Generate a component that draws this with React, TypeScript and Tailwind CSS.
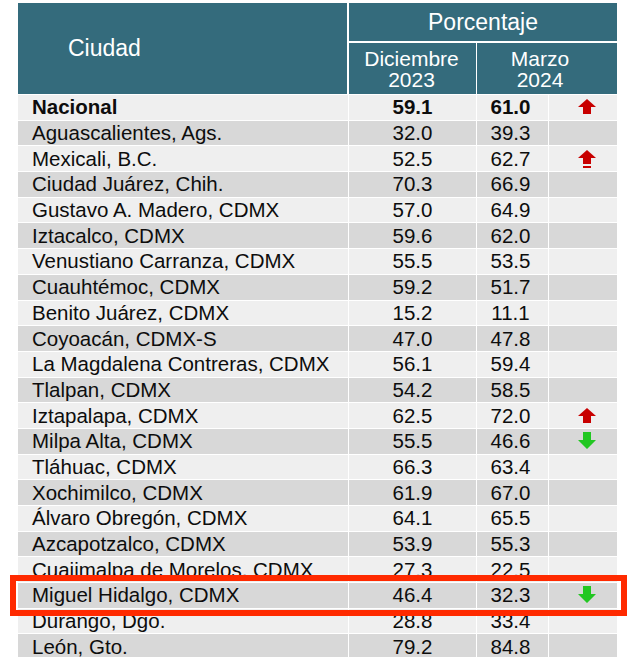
import React from "react";

type Row = { name: string; dic: string; mar: string; arrow?: "up" | "upbar" | "down"; bold?: boolean; box?: boolean };

const rows: Row[] = [
  { name: "Nacional", dic: "59.1", mar: "61.0", arrow: "up", bold: true },
  { name: "Aguascalientes, Ags.", dic: "32.0", mar: "39.3" },
  { name: "Mexicali, B.C.", dic: "52.5", mar: "62.7", arrow: "upbar" },
  { name: "Ciudad Juárez, Chih.", dic: "70.3", mar: "66.9" },
  { name: "Gustavo A. Madero, CDMX", dic: "57.0", mar: "64.9" },
  { name: "Iztacalco, CDMX", dic: "59.6", mar: "62.0" },
  { name: "Venustiano Carranza, CDMX", dic: "55.5", mar: "53.5" },
  { name: "Cuauhtémoc, CDMX", dic: "59.2", mar: "51.7" },
  { name: "Benito Juárez, CDMX", dic: "15.2", mar: "11.1" },
  { name: "Coyoacán, CDMX-S", dic: "47.0", mar: "47.8" },
  { name: "La Magdalena Contreras, CDMX", dic: "56.1", mar: "59.4" },
  { name: "Tlalpan, CDMX", dic: "54.2", mar: "58.5" },
  { name: "Iztapalapa, CDMX", dic: "62.5", mar: "72.0", arrow: "up" },
  { name: "Milpa Alta, CDMX", dic: "55.5", mar: "46.6", arrow: "down" },
  { name: "Tláhuac, CDMX", dic: "66.3", mar: "63.4" },
  { name: "Xochimilco, CDMX", dic: "61.9", mar: "67.0" },
  { name: "Álvaro Obregón, CDMX", dic: "64.1", mar: "65.5" },
  { name: "Azcapotzalco, CDMX", dic: "53.9", mar: "55.3" },
  { name: "Cuajimalpa de Morelos, CDMX", dic: "27.3", mar: "22.5" },
  { name: "Miguel Hidalgo, CDMX", dic: "46.4", mar: "32.3", arrow: "down", box: true },
  { name: "Durango, Dgo.", dic: "28.8", mar: "33.4" },
  { name: "León, Gto.", dic: "79.2", mar: "84.8" },
];

function Arrow({ kind }: { kind: "up" | "upbar" | "down" }) {
  if (kind === "down") {
    return (
      <svg width="20" height="18" viewBox="0 0 20 18" className="block">
        <polygon points="6,0 14,0 14,8 19,8 10,17 1,8 6,8" fill="#22c722" />
      </svg>
    );
  }
  if (kind === "upbar") {
    return (
      <svg width="20" height="20" viewBox="0 0 20 20" className="block">
        <polygon points="10,1 19,9 14,9 14,15 6,15 6,9 1,9" fill="#c80000" />
        <rect x="6" y="17" width="8" height="2" fill="#c80000" />
      </svg>
    );
  }
  return (
    <svg width="20" height="18" viewBox="0 0 20 18" className="block">
      <polygon points="10,1 19,9 14,9 14,16 6,16 6,9 1,9" fill="#c80000" />
    </svg>
  );
}

export default function App() {
  return (
    <div
      className="w-[633px] h-[657px] overflow-hidden bg-white pt-[3px] pl-[18px]"
      style={{ fontFamily: '"Liberation Sans", Arial, sans-serif' }}
    >
      <div className="w-[599px] flex flex-col gap-px bg-white">
        {/* Header */}
        <div className="grid grid-cols-[330px_127px_71px_68px] grid-rows-[38px_51px] gap-x-[1px] gap-y-[2px] text-white">
          <div className="row-span-2 bg-[#346b7c] flex items-center pl-[50px] text-[23px] mr-[1px]">Ciudad</div>
          <div className="col-span-3 bg-[#346b7c] flex items-center justify-center text-[23px]">Porcentaje</div>
          <div className="bg-[#346b7c] flex flex-col items-center justify-center text-[21px] leading-[21px] pr-[2px]">
            <span>Diciembre</span>
            <span>2023</span>
          </div>
          <div className="col-span-2 bg-[#346b7c] flex flex-col items-center justify-center text-[21px] leading-[21px] pr-[14px]">
            <span>Marzo</span>
            <span>2024</span>
          </div>
        </div>
        {/* Body */}
        {rows.map((r, i) => {
          const bg = i % 2 === 0 ? "bg-[#efefef]" : "bg-[#d8d8d8]";
          const fw = r.bold ? "font-bold" : "font-normal";
          return (
            <div
              key={r.name}
              className={`relative grid grid-cols-[330px_127px_71px_68px] gap-x-px h-[24.7px] text-[20.5px] leading-[24px] text-[#0d0d0d] ${fw}`}
            >
              <div className={`${bg} pl-[14px] flex items-center whitespace-nowrap overflow-hidden`}>{r.name}</div>
              <div className={`${bg} flex items-center justify-center`}>{r.dic}</div>
              <div className={`${bg} flex items-center justify-center pr-[4px]`}>{r.mar}</div>
              <div className={`${bg} flex items-center justify-center pl-[8px]`}>
                {r.arrow && <Arrow kind={r.arrow} />}
              </div>
              {r.box && (
                <div className="absolute left-[-8px] right-[-10px] top-[-8px] bottom-[-8px] border-[6px] border-[#ff2a00] z-10 pointer-events-none" />
              )}
            </div>
          );
        })}
      </div>
    </div>
  );
}
